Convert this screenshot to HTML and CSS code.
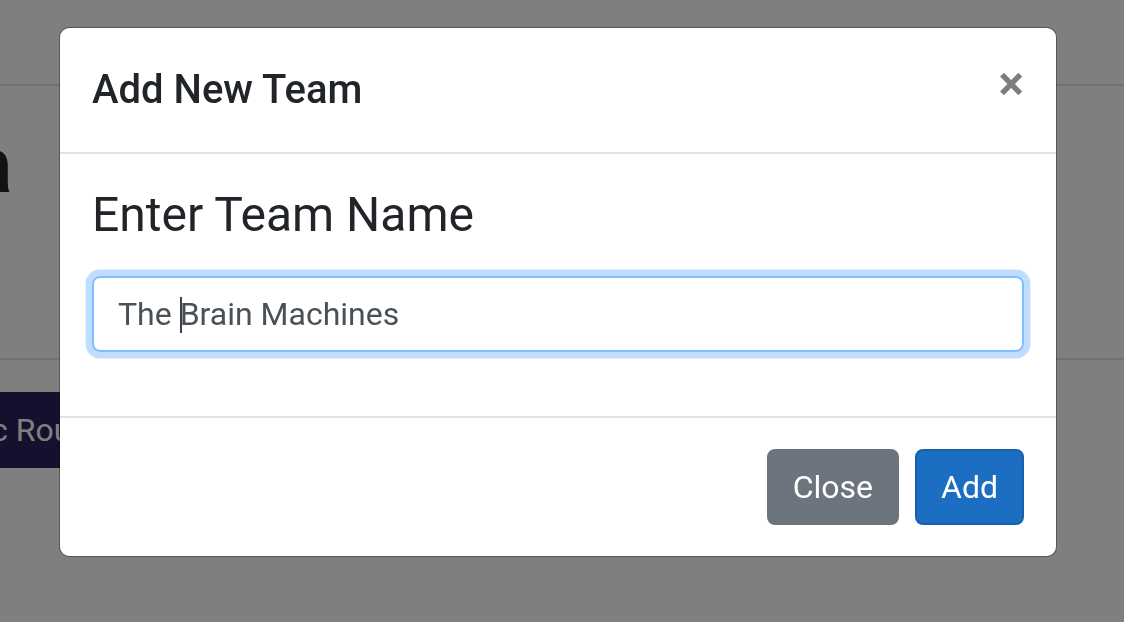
FILE: index.html
```html
<!DOCTYPE html>
<html lang="en">
<head>
<meta charset="utf-8">
<title>Add New Team</title>
<link rel="stylesheet" href="styles.css">
</head>
<body>
  <div class="page">
    <div class="top-bar"></div>
    <div class="page-title"><h1>Trivia</h1></div>
    <div class="page-rule"></div>
    <div class="page-actions"><button class="page-btn">c Round Robin</button></div>
  </div>
  <div class="backdrop"></div>
  <div class="modal">
    <div class="modal-header">
      <h5 class="modal-title">Add New Team</h5>
      <button class="close" type="button" aria-label="Close">×</button>
    </div>
    <div class="modal-body">
      <div class="form-group">
        <label class="team-label"><h4>Enter Team Name</h4></label>
        <div class="form-control">The <span class="caret"></span>Brain Machines</div>
      </div>
    </div>
    <div class="modal-footer">
      <button class="btn btn-secondary" type="button">Close</button>
      <button class="btn btn-primary" type="button">Add</button>
    </div>
  </div>
</body>
</html>
```

FILE: styles.css
```css
* { box-sizing: border-box; }

html, body {
  margin: 0;
  padding: 0;
  width: 1124px;
  height: 622px;
  overflow: hidden;
  background: #fff;
  font-family: Roboto, "Liberation Sans", sans-serif;
  color: #212529;
}

/* underlying page */
.page {
  display: flex;
  flex-direction: column;
}
.top-bar {
  height: 86px;
  border-bottom: 2px solid #dee2e6;
}
.page-title {
  width: 12px;
  margin-top: 31px;
  overflow: hidden;
  display: flex;
  justify-content: flex-end;
  white-space: nowrap;
}
.page-title h1 {
  margin: 0;
  font-size: 80px;
  line-height: 1.2;
  font-weight: 700;
  color: #212529;
}
.page-rule {
  margin-top: 145px;
  height: 2px;
  background: #dee2e6;
}
.page-actions {
  margin-top: 32px;
  display: flex;
  overflow: hidden;
}
.page-btn {
  margin-left: -9px;
  height: 76px;
  padding: 0 24px 0 0;
  border: 0;
  background: #2b205c;
  color: #fff;
  font-family: Roboto, "Liberation Sans", sans-serif;
  font-size: 32px;
  white-space: nowrap;
}

.backdrop {
  position: fixed;
  inset: 0;
  background: rgba(0, 0, 0, 0.5);
}

/* modal */
.modal {
  position: absolute;
  left: 59px;
  top: 27px;
  width: 998px;
  background: #fff;
  border: 1px solid rgba(0, 0, 0, 0.3);
  border-radius: 10px;
  display: flex;
  flex-direction: column;
  background-clip: padding-box;
}

.modal-header {
  display: flex;
  align-items: flex-start;
  justify-content: space-between;
  padding: 32px;
  border-bottom: 2px solid #dee2e6;
}
.modal-title {
  margin: 0;
  font-size: 40px;
  font-weight: 500;
  line-height: 1.5;
  color: #212529;
}
.close {
  margin: -32px -32px -32px auto;
  padding: 32px;
  border: 0;
  background: transparent;
  font-family: Roboto, "Liberation Sans", sans-serif;
  font-size: 48px;
  font-weight: 700;
  line-height: 1;
  color: #000;
  opacity: 0.5;
}

.modal-body {
  padding: 32px;
}
.form-group {
  margin-bottom: 32px;
  display: flex;
  flex-direction: column;
  align-items: stretch;
}
.team-label {
  display: block;
  margin-bottom: 16px;
}
.team-label h4 {
  margin: 0 0 16px;
  font-size: 48px;
  font-weight: 400;
  line-height: 1.2;
  color: #212529;
}
.form-control {
  height: 76px;
  padding: 12px 24px;
  font-size: 32px;
  line-height: 48px;
  color: #495057;
  border: 2px solid #80bdff;
  border-radius: 8px;
  box-shadow: 0 0 0 6.4px rgba(0, 123, 255, 0.25);
  white-space: pre;
}
.caret {
  display: inline-block;
  width: 2px;
  height: 36px;
  margin-right: -2px;
  vertical-align: -8px;
  background: #3a4047;
}

.modal-footer {
  display: flex;
  align-items: center;
  justify-content: flex-end;
  padding: 23px 24px;
  border-top: 2px solid #dee2e6;
}
.btn {
  margin: 8px;
  padding: 12px 24px;
  border: 2px solid transparent;
  border-radius: 8px;
  font-family: Roboto, "Liberation Sans", sans-serif;
  font-size: 32px;
  line-height: 1.5;
  color: #fff;
}
.btn-secondary {
  background: #6c757d;
  border-color: #6c757d;
}
.btn-primary {
  background: #1b6ec2;
  border-color: #1861ac;
}
```
